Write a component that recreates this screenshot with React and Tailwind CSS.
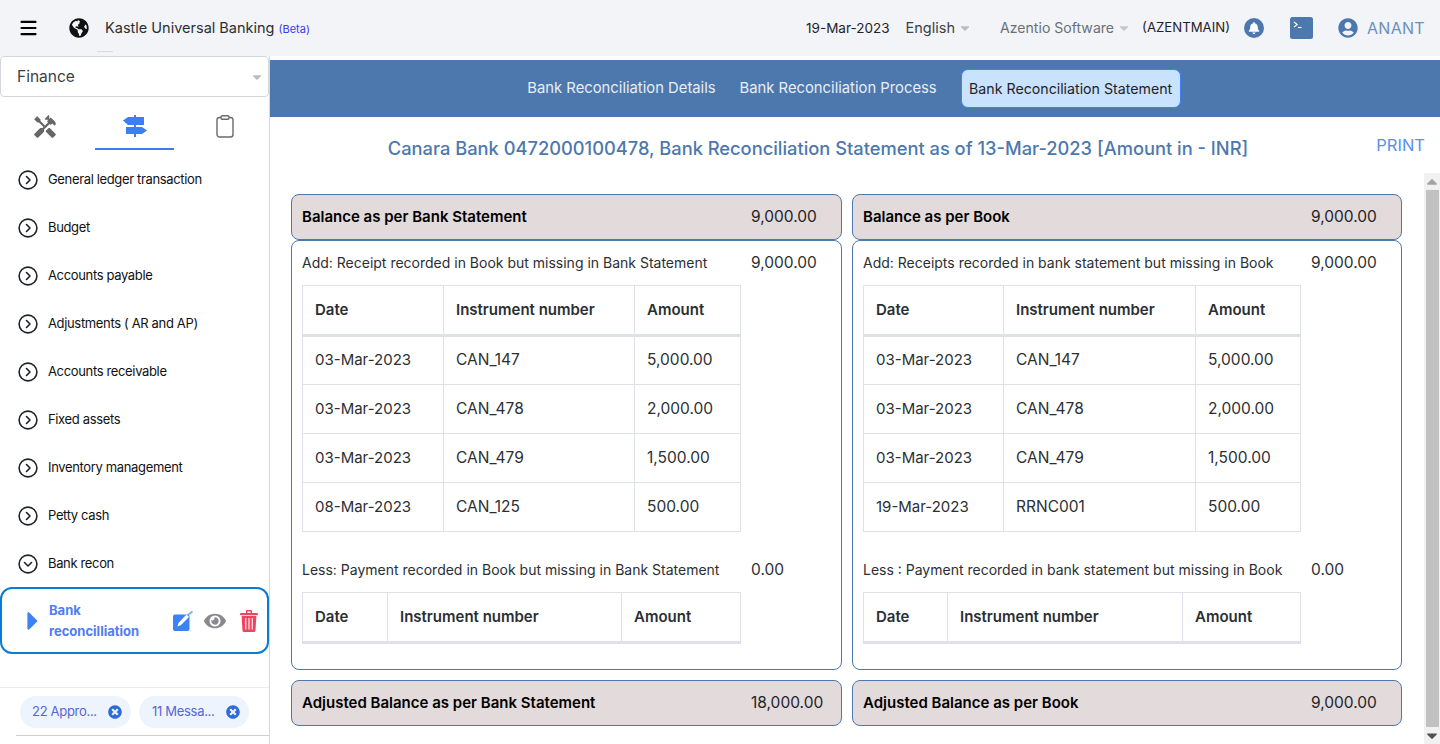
import React from 'react';
import { Menu } from 'lucide-react';
import { FaGlobeAmericas, FaBell, FaUserCircle, FaEye, FaCaretDown, FaCaretUp, FaCaretRight, FaTimesCircle } from 'react-icons/fa';
import { MdHandyman } from 'react-icons/md';

const navItems = [
  'General ledger transaction',
  'Budget',
  'Accounts payable',
  'Adjustments ( AR and AP)',
  'Accounts receivable',
  'Fixed assets',
  'Inventory management',
  'Petty cash',
];

const Chevron = ({ down }) => (
  <svg width="20" height="20" viewBox="0 0 20 20" fill="none" stroke="#1f2328" strokeWidth="1.6" strokeLinecap="round" strokeLinejoin="round" className="shrink-0">
    <circle cx="10" cy="10" r="8.9" />
    {down ? <path d="M6.5 8.5 10 12l3.5-3.5" /> : <path d="M8.5 6.5 12 10l-3.5 3.5" />}
  </svg>
);

const SignsIcon = () => (
  <svg width="24" height="22" viewBox="0 0 24 22" fill="#3b7ef6">
    <rect x="11" y="0" width="2" height="22" />
    <path d="M0 5.5 5 2h16v8H5z" />
    <path d="M3 12h16l5 3.5-5 3.5H3z" />
  </svg>
);

const ClipboardIcon = () => (
  <svg width="18" height="23" viewBox="0 0 18 23" fill="none" stroke="#6a6a6a" strokeWidth="1.4">
    <rect x="1" y="2.5" width="16" height="19.5" rx="2.5" />
    <rect x="5" y="0.8" width="8" height="3.4" rx="1.2" fill="#fff" />
  </svg>
);

const EditIcon = () => (
  <svg width="20" height="20" viewBox="0 0 20 20">
    <rect x="0" y="3.5" width="16.5" height="16.5" rx="2" fill="#3b82f6" />
    <path d="M4.5 15.5l1-3.5 8-8.5 2.5 2.5-8 8z" fill="#fff" />
    <path d="M14.8 4.2 19.5 0.3" stroke="#6ea2f8" strokeWidth="1.5" />
  </svg>
);

const TrashIcon = () => (
  <svg width="18" height="22" viewBox="0 0 18 22" fill="#ee4662">
    <rect x="0" y="3" width="18" height="2.2" rx="1" />
    <path d="M6 3V1.2C6 .5 6.5 0 7.2 0h3.6c.7 0 1.2.5 1.2 1.2V3h-1.5V1.5h-3V3z" />
    <path d="M1.6 6h14.8l-.9 14.4c-.1.9-.7 1.6-1.6 1.6H4.1c-.9 0-1.5-.7-1.6-1.6z" />
    <rect x="5" y="8" width="1.4" height="11.5" fill="#fbd3da" />
    <rect x="8.3" y="8" width="1.4" height="11.5" fill="#fbd3da" />
    <rect x="11.6" y="8" width="1.4" height="11.5" fill="#fbd3da" />
  </svg>
);

const TerminalIcon = () => (
  <svg width="23" height="22" viewBox="0 0 23 22">
    <rect width="23" height="22" rx="2.5" fill="#4d78ad" />
    <path d="M4 5l3.2 2.6L4 10" fill="none" stroke="#fff" strokeWidth="1.1" />
    <path d="M8 10.5h3.5" stroke="#fff" strokeWidth="1.1" />
  </svg>
);

function DataTable({ widths, rows }) {
  return (
    <table className="border-collapse table-fixed text-[15px] text-[#2b2f33]" style={{ width: widths.reduce((a, b) => a + b, 0) }}>
      <colgroup>
        {widths.map((w, i) => <col key={i} style={{ width: w }} />)}
      </colgroup>
      <thead>
        <tr className="h-[50px]">
          {['Date', 'Instrument number', 'Amount'].map((h) => (
            <th key={h} className="border border-b-[3px] border-[#dee2e8] pl-3 text-left font-semibold">{h}</th>
          ))}
        </tr>
      </thead>
      {rows && (
        <tbody>
          {rows.map((r, i) => (
            <tr key={i} className="h-[49px]">
              {r.map((c, j) => (
                <td key={j} className={`border border-[#dee2e8] pl-3 ${j > 0 ? 'pb-[1px] text-[15.5px]' : ''}`}>{c}</td>
              ))}
            </tr>
          ))}
        </tbody>
      )}
    </table>
  );
}

const BalanceBar = ({ label, value, labelWidth, mt }) => (
  <div className={`flex h-[46px] items-center rounded-lg border border-[#4d78ad] bg-[#e2dadb] pl-[10px] text-[15px] text-[#1f2328] ${mt || ''}`}>
    <span className={`${labelWidth} font-semibold text-black`}>{label}</span>
    <span className="text-[15.5px]">{value}</span>
  </div>
);

function Column({ width, labelWidth, top, add, addLabel, lessLabel, widths, lessWidths, rows, adjusted, adjustedLabel }) {
  return (
    <div className={`${width} shrink-0`}>
      <BalanceBar label={top} value="9,000.00" labelWidth={labelWidth} />
      <div className="h-[430px] rounded-lg border border-[#4d78ad] pl-[10px] text-[15.5px] text-[#2b2f33]">
        <div className="flex h-[44px] items-center">
          <span className={`${labelWidth} mb-[1px] text-[14px]`}>{addLabel}</span>
          <span>{add}</span>
        </div>
        <DataTable widths={widths} rows={rows} />
        <div className="mt-[24px] flex h-[28px] items-center">
          <span className={`${labelWidth} mb-[1px] text-[14px]`}>{lessLabel}</span>
          <span>0.00</span>
        </div>
        <div className="mt-[8px]">
          <DataTable widths={lessWidths} />
        </div>
      </div>
      <BalanceBar label={adjustedLabel} value={adjusted} labelWidth={labelWidth} mt="mt-[10px]" />
    </div>
  );
}

export default function App() {
  const leftRows = [
    ['03-Mar-2023', 'CAN_147', '5,000.00'],
    ['03-Mar-2023', 'CAN_478', '2,000.00'],
    ['03-Mar-2023', 'CAN_479', '1,500.00'],
    ['08-Mar-2023', 'CAN_125', '500.00'],
  ];
  const rightRows = [
    ['03-Mar-2023', 'CAN_147', '5,000.00'],
    ['03-Mar-2023', 'CAN_478', '2,000.00'],
    ['03-Mar-2023', 'CAN_479', '1,500.00'],
    ['19-Mar-2023', 'RRNC001', '500.00'],
  ];

  return (
    <div className="flex h-[744px] w-[1440px] flex-col overflow-hidden bg-white font-['Inter',sans-serif] text-[#1f2328]">
      {/* Top bar */}
      <header className="flex h-[56px] shrink-0 items-center bg-[#f3f4f8] pl-[18px] pr-[15px]">
        <Menu size={20} strokeWidth={2.4} className="h-[24px] w-[21px] text-black" />
        <FaGlobeAmericas size={20} className="ml-[30px] text-[#111]" />
        <span className="ml-[16px] text-[14.5px] text-[#2b2f33]">Kastle Universal Banking</span>
        <span className="ml-[4px] mt-[3px] text-[11px] text-[#3a3aef]">(Beta)</span>
        <div className="ml-auto flex items-center">
          <span className="text-[13.5px] text-[#1f2328]">19-Mar-2023</span>
          <span className="ml-[16px] text-[14.5px] text-[#3a3f45]">English</span>
          <FaCaretDown size={14} className="ml-[3px] text-[#b9bcc2]" />
          <span className="ml-[28px] text-[14.1px] text-[#6b7077]">Azentio Software</span>
          <FaCaretDown size={14} className="ml-[3px] text-[#c4c7cc]" />
          <span className="ml-[11px] text-[13.2px] text-[#1f2328]">(AZENTMAIN)</span>
          <span className="ml-[14px] flex h-[20px] w-[20px] items-center justify-center rounded-full bg-[#4d78ad]">
            <FaBell size={12} className="text-white" />
          </span>
          <span className="ml-[26px]"><TerminalIcon /></span>
          <FaUserCircle size={20} className="ml-[25px] text-[#4d78ad]" />
          <span className="ml-[9px] text-[16px] tracking-[0.3px] text-[#6a8fbc]">ANANT</span>
        </div>
      </header>

      <div className="flex min-h-0 flex-1">
        {/* Sidebar */}
        <aside className="relative flex w-[270px] shrink-0 flex-col border-r border-[#d8d8d8]">
          <div className="absolute -top-[5px] left-[97px] h-px w-[16px] bg-[#d8dade]" />
          <div className="flex h-[41px] items-center justify-between rounded-[4px] border border-[#d3d6dd] bg-white pl-4 pr-[4px] text-[15.5px] text-[#3a3f45]">
            <span>Finance</span>
            <FaCaretDown size={14} className="text-[#b9bcc2]" />
          </div>
          <div className="mt-[14px] flex h-[39px]">
            <div className="flex w-[95px] justify-center pt-[3px]">
              <MdHandyman size={26} className="ml-[-5px] text-[#666]" />
            </div>
            <div className="flex h-[39px] w-[80px] justify-center border-b-2 border-[#3b7cf6] pl-[2px] pt-[4px]">
              <div className="h-[22px]"><SignsIcon /></div>
            </div>
            <div className="flex w-[95px] justify-center pt-[4px]">
              <div className="ml-[7px] h-[23px]"><ClipboardIcon /></div>
            </div>
          </div>
          <nav className="mt-[6px] flex flex-col pl-[18px]">
            {navItems.map((n) => (
              <div key={n} className="flex h-[48px] items-center gap-[10px] text-[13px] tracking-[-0.35px] text-[#111]">
                <Chevron />
                <span>{n}</span>
              </div>
            ))}
            <div className="flex h-[48px] items-center gap-[10px] text-[13px] tracking-[-0.35px] text-[#111]">
              <Chevron down />
              <span>Bank recon</span>
            </div>
          </nav>
          <div className="mt-[-1px] flex h-[67px] items-center rounded-xl border-2 border-[#0b7bd3] pl-[19px] pr-[8px]">
            <FaCaretRight size={30} className="ml-[-3px] shrink-0 text-[#3b82f6]" />
            <span className="ml-[1px] w-[110px] text-[13px] font-bold leading-[21px] text-[#4f7df3]">Bank reconcilliation</span>
            <span className="ml-[14px]"><EditIcon /></span>
            <FaEye size={22} className="ml-[11px] text-[#8a8a8e]" />
            <span className="ml-[14px]"><TrashIcon /></span>
          </div>
          <div className="mt-auto mb-[8px] flex h-[49px] items-center gap-[8px] pl-[20px]">
            <div className="flex h-[32px] w-[111px] items-center rounded-full bg-[#eef4fd] pl-[12px] text-[13px] tracking-[-0.3px] text-[#5566d8]">
              <span className="w-[76px]">22 Appro...</span>
              <FaTimesCircle size={14} className="text-[#2f6bd8]" />
            </div>
            <div className="flex h-[32px] w-[110px] items-center rounded-full bg-[#eef4fd] pl-[13px] text-[13px] tracking-[-0.3px] text-[#5566d8]">
              <span className="w-[74px]">11 Messa...</span>
              <FaTimesCircle size={14} className="text-[#2f6bd8]" />
            </div>
          </div>
          <div className="absolute bottom-[56px] left-0 h-[1px] w-full bg-[#ebebeb]" />
          <div className="absolute bottom-[8px] left-[16px] right-0 h-[1px] bg-[#cfcfcf]" />
        </aside>

        {/* Main */}
        <main className="flex min-w-0 flex-1 flex-col">
          <div className="mt-[4px] flex h-[57px] shrink-0 items-center justify-center bg-[#4d78ad] pr-[2px] text-[14.8px]">
            <span className="text-[#e8eef6]">Bank Reconciliation Details</span>
            <span className="ml-[24px] text-[#e8eef6]">Bank Reconciliation Process</span>
            <span className="ml-[24px] flex h-[39px] w-[220px] items-center justify-center rounded-[7px] border border-[#3b82f6] bg-[#c9e2fd] text-[14.2px] text-[#1f2328]">Bank Reconciliation Statement</span>
          </div>
          <div className="relative flex h-[56px] shrink-0 items-center justify-center pr-[74px] pt-[8px]">
            <h1 className="text-[18.3px] font-medium text-[#4d78ad]">Canara Bank 0472000100478, Bank Reconciliation Statement as of 13-Mar-2023 [Amount in - INR]</h1>
            <span className="absolute right-[15px] top-[16px] text-[16.5px] text-[#5a90ea]">PRINT</span>
          </div>
          <div className="flex min-h-0 flex-1">
            <div className="flex flex-1 gap-[10px] pl-[21px] pt-[21px]">
              <Column
                width="w-[551px]"
                labelWidth="w-[449px]"
                top="Balance as per Bank Statement"
                add="9,000.00"
                addLabel="Add: Receipt recorded in Book but missing in Bank Statement"
                lessLabel="Less: Payment recorded in Book but missing in Bank Statement"
                widths={[141, 191, 106]}
                lessWidths={[85, 234, 119]}
                rows={leftRows}
                adjustedLabel="Adjusted Balance as per Bank Statement"
                adjusted="18,000.00"
              />
              <Column
                width="w-[550px]"
                labelWidth="w-[448px]"
                top="Balance as per Book"
                add="9,000.00"
                addLabel="Add: Receipts recorded in bank statement but missing in Book"
                lessLabel="Less : Payment recorded in bank statement but missing in Book"
                widths={[140, 192, 105]}
                lessWidths={[84, 235, 118]}
                rows={rightRows}
                adjustedLabel="Adjusted Balance as per Book"
                adjusted="9,000.00"
              />
            </div>
            <div className="flex w-[16px] shrink-0 flex-col items-center bg-[#f1f1f1]">
              <FaCaretUp size={12} className="h-[17px] text-[#a3a3a3]" />
              <div className="w-[13px] flex-1 bg-[#c1c1c1]" />
              <FaCaretDown size={12} className="h-[17px] text-[#505050]" />
            </div>
          </div>
        </main>
      </div>
    </div>
  );
}
